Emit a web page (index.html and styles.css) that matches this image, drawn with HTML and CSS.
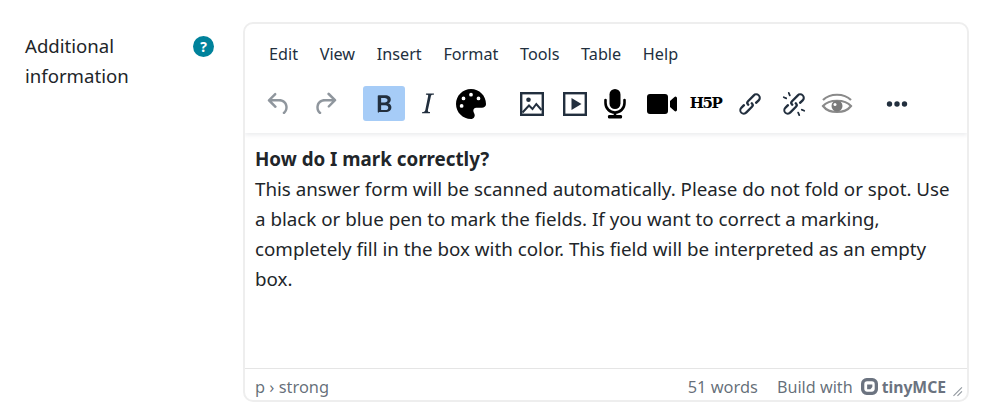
FILE: index.html
```html
<!DOCTYPE html>
<html lang="en">
<head>
<meta charset="utf-8">
<title>Additional information</title>
<link rel="stylesheet" href="styles.css">
</head>
<body>
<div class="field">
  <div class="label-col">
    <label class="label">Additional information</label>
    <span class="help">?</span>
  </div>
  <div class="editor">
    <div class="header">
      <div class="menubar">
        <span class="menu">Edit</span><span class="menu">View</span><span class="menu">Insert</span><span class="menu">Format</span><span class="menu">Tools</span><span class="menu">Table</span><span class="menu">Help</span>
      </div>
      <div class="toolbar">
        <div class="group g-history">
          <button class="tb dim"><svg viewBox="0 0 24 24" width="30" height="30"><path d="M6.400 8H12c3.700 0 6.200 2 6.800 5.100.6 2.700-.4 5.600-2.300 6.800a1 1 0 0 1-1-1.800c1.100-.6 1.800-2.700 1.400-4.600-.5-2.100-2.100-3.500-4.900-3.500H6.400l3.300 3.300a1 1 0 1 1-1.400 1.400l-5-5a1 1 0 0 1 0-1.400l5-5a1 1 0 0 1 1.400 1.400L6.400 8Z"/></svg></button>
          <button class="tb dim"><svg viewBox="0 0 24 24" width="30" height="30"><path d="M17.600 10H12c-2.800 0-4.400 1.400-4.900 3.500-.4 2 .3 4 1.400 4.600a1 1 0 1 1-1 1.800c-2-1.200-2.900-4.100-2.300-6.800.6-3 3.100-5.100 6.800-5.100h5.600l-3.300-3.300a1 1 0 1 1 1.400-1.400l5 5a1 1 0 0 1 0 1.400l-5 5a1 1 0 0 1-1.400-1.400l3.300-3.300Z"/></svg></button>
        </div>
        <div class="group g-format">
          <button class="tb active"><svg viewBox="0 0 24 24" width="30" height="30"><path d="M7.800 19c-.3 0-.5 0-.6-.2l-.2-.5V5.700c0-.2 0-.4.2-.5l.6-.2h5c1.500 0 2.700.3 3.500 1 .7.600 1.100 1.400 1.100 2.500 0 .7-.2 1.300-.6 1.800-.4.600-.9.900-1.500 1.100.8.200 1.400.6 1.900 1.100.5.600.7 1.300.7 2.100 0 1.100-.4 2-1.200 2.700-.8.700-2 1-3.500 1H7.800Zm4.700-8.300c.7 0 1.300-.1 1.700-.5.400-.3.600-.7.600-1.300 0-.5-.2-1-.6-1.200-.4-.3-1-.5-1.700-.5H9.700v3.500h2.800Zm.5 6.100c.8 0 1.400-.2 1.800-.5.4-.3.600-.8.600-1.400 0-.6-.2-1-.6-1.400-.4-.3-1-.5-1.800-.5H9.700v3.800H13Z"/></svg></button>
          <button class="tb"><svg viewBox="0 0 24 24" width="33" height="33"><path d="m16.700 4.700-.1.900h-.3c-.6 0-1 0-1.400.3-.3.300-.4.600-.5 1.100l-2.100 9.800v.6c0 .5.400.800 1.400.8h.2l-.2.800H8l.2-.8h.2c1.100 0 1.800-.5 2-1.500l2-9.800.1-.5c0-.6-.4-.800-1.400-.8h-.3l.2-.9h5.800Z"/></svg></button>
          <button class="tb black"><svg viewBox="0 0 512 512" width="30" height="30"><path d="M512 256c0 .9 0 1.800 0 2.700-.4 36.500-33.600 61.300-70.100 61.300H344c-26.500 0-48 21.500-48 48 0 3.400.4 6.700 1 9.900 2.100 10.200 6.500 20 10.800 29.900 6.100 13.800 12.100 27.500 12.100 42 0 31.800-21.600 60.700-53.400 62-3.500.1-7 .2-10.600.2C114.600 512 0 397.400 0 256S114.600 0 256 0s256 114.600 256 256ZM128 288a32 32 0 1 0-64 0 32 32 0 1 0 64 0Zm0-96a32 32 0 1 0 0-64 32 32 0 1 0 0 64ZM288 96a32 32 0 1 0-64 0 32 32 0 1 0 64 0Zm96 96a32 32 0 1 0 0-64 32 32 0 1 0 0 64Z"/></svg></button>
        </div>
        <div class="group g-media">
          <button class="tb t-pic"><svg class="line" viewBox="0 0 24 24" width="24" height="24"><rect x="1.200" y="1.200" width="21.600" height="21.600"/><path d="M2.500 20.500 9 13.500l3.500 3.500 3.800-5 5.200 6"/><circle class="solid" cx="8.500" cy="7.800" r="2.300"/></svg></button>
          <button class="tb t-pic"><svg class="line" viewBox="0 0 24 24" width="24" height="24"><rect x="1.200" y="1.200" width="21.600" height="21.600"/><path class="solid" d="M8.500 6 18.500 12l-10 6V6Z"/></svg></button>
          <button class="tb black t-mic"><svg viewBox="0 0 22 31" width="22" height="31"><rect x="5.500" y="1" width="11" height="20" rx="5.500"/><path class="u" d="M1.500 12v3a9.500 9.500 0 0 0 19 0v-3"/><rect x="9.700" y="24" width="2.600" height="4"/><rect x="4" y="27" width="14" height="3.500" rx="1.200"/></svg></button>
          <button class="tb black t-video"><svg viewBox="0 0 30 20" width="30" height="20"><path d="M3 0h15a3 3 0 0 1 3 3v14a3 3 0 0 1-3 3H3a3 3 0 0 1-3-3V3a3 3 0 0 1 3-3Z"/><path d="M23 7l4.500-4a1.500 1.500 0 0 1 2.500 1v12a1.500 1.500 0 0 1-2.500 1L23 13Z"/></svg></button>
          <button class="tb t-h5p"><span class="h5p">H5P</span></button>
          <button class="tb t-link"><svg viewBox="0 0 24 24" width="28" height="28"><path d="M6.200 12.300a1 1 0 0 1 1.400 1.400l-2 2a2 2 0 1 0 2.600 2.800l4.800-4.800a1 1 0 0 0 0-1.400 1 1 0 1 1 1.400-1.300 2.900 2.900 0 0 1 0 4.100l-4.800 4.800a3.900 3.900 0 0 1-5.700 0 3.900 3.900 0 0 1 .2-5.600l2-2Zm11.600-.6a1 1 0 0 1-1.400-1.400l2.100-2a2 2 0 1 0-2.700-2.800L11 10.300a1 1 0 0 0 0 1.400A1 1 0 1 1 9.600 13a2.900 2.900 0 0 1 0-4.100l4.800-4.800a3.900 3.900 0 0 1 5.700 0 3.900 3.900 0 0 1 0 5.600l-2.200 2Z"/></svg></button>
          <button class="tb t-unlink"><svg viewBox="0 0 24 24" width="28" height="28"><path d="M6.200 12.300a1 1 0 0 1 1.400 1.400l-2 2a2 2 0 1 0 2.600 2.800l4.800-4.800a1 1 0 0 0 0-1.400 1 1 0 1 1 1.400-1.300 2.900 2.900 0 0 1 0 4.100l-4.800 4.800a3.900 3.900 0 0 1-5.700 0 3.900 3.900 0 0 1 .2-5.600l2-2Zm11.600-.6a1 1 0 0 1-1.400-1.400l2.100-2a2 2 0 1 0-2.700-2.800L11 10.300a1 1 0 0 0 0 1.400A1 1 0 1 1 9.600 13a2.900 2.900 0 0 1 0-4.100l4.800-4.800a3.900 3.900 0 0 1 5.700 0 3.900 3.900 0 0 1 0 5.600l-2.200 2Z"/><path d="M7.200 1.800a.8.800 0 0 1 1 .4l1 2.300a.8.800 0 0 1-1.400.6l-1-2.300a.8.800 0 0 1 .4-1ZM2.500 6a.8.800 0 0 1 1-.5l2.300 1a.8.800 0 0 1-.6 1.400l-2.300-1a.8.800 0 0 1-.4-.9ZM21.500 18a.8.800 0 0 1-1 .5l-2.300-1a.8.800 0 0 1 .6-1.400l2.300 1a.8.800 0 0 1 .4.900ZM16.800 22.200a.8.800 0 0 1-1-.4l-1-2.300a.8.800 0 0 1 1.400-.6l1 2.300a.8.800 0 0 1-.4 1Z"/></svg></button>
          <button class="tb t-eye"><svg class="eye" viewBox="0 0 32 24" width="32" height="24"><path d="M2 8C9 1 23 1 30 8"/><path d="M2 14C8 7 24 7 30 14 24 22 8 22 2 14Z"/><circle class="iris" cx="16" cy="14" r="5.500"/><circle class="glint" cx="14" cy="12.500" r="1.500"/></svg></button>
        </div>
        <div class="group g-more">
          <button class="tb"><svg viewBox="0 0 24 24" width="24" height="24"><circle cx="4.500" cy="12" r="2.700"/><circle cx="12" cy="12" r="2.700"/><circle cx="19.500" cy="12" r="2.700"/></svg></button>
        </div>
      </div>
    </div>
    <div class="content">
      <p><strong>How do I mark correctly?</strong><br>This answer form will be scanned automatically. Please do not fold or spot. Use a black or blue pen to mark the fields. If you want to correct a marking, completely fill in the box with color. This field will be interpreted as an empty box.</p>
    </div>
    <div class="status">
      <span class="path">p › strong</span>
      <span class="words">51 words</span>
      <span class="brand">Build with
        <svg class="logo" viewBox="0 0 18 18" width="17" height="17"><path fill-rule="evenodd" d="M6 0h6a6 6 0 0 1 6 6v6a6 6 0 0 1-6 6H6a6 6 0 0 1-6-6V6a6 6 0 0 1 6-6Zm.5 3.500a3 3 0 0 0-3 3v5a3 3 0 0 0 3 3h5a3 3 0 0 0 3-3v-5a3 3 0 0 0-3-3h-5Z"/><path d="M6.500 7h5.500v2.500l-2 2.500H6.500V7Z"/></svg>
        <b class="tiny">tinyMCE</b>
      </span>
      <svg class="grip" viewBox="0 0 10 10" width="11" height="11"><path d="M8.700 1 1 8.700l.7.700L9.400 1.700 8.700 1Zm.7 4.300L5.300 9.400l-.7-.7 4.100-4.100.7.700Z"/></svg>
    </div>
  </div>
</div>
</body>
</html>
```

FILE: styles.css
```css
* { box-sizing: border-box; }
html, body { margin: 0; padding: 0; background: #fff; }
body {
  font-family: "Noto Sans", "Open Sans", sans-serif;
  font-size: 18.77px;
  color: #212529;
}
.field { display: flex; padding: 22px 29px 14px 25px; }
.label-col { width: 218px; flex: none; display: flex; justify-content: space-between; align-items: flex-start; padding: 9px 29px 0 0; }
.label { width: 130px; line-height: 30px; font-size: 18.6px; color: #212529; }
.help {
  width: 21px; height: 21px; margin-top: 5px; border-radius: 50%;
  background: #00829b; color: #fff; font: 700 14px/21px "Noto Sans", sans-serif; text-align: center;
}
.editor {
  flex: 1; height: 380px; display: flex; flex-direction: column;
  border: 2px solid #eeeeee; border-radius: 10px; overflow: hidden; background: #fff;
}
.header { height: 109px; flex: none; box-shadow: 0 2px 4px rgba(34,47,62,.09); position: relative; padding-top: 12px; }
.menubar { display: flex; height: 36px; padding-left: 24px; gap: 21.7px; align-items: center; font-size: 16.2px; }
.menu { color: #222f3e; }
.toolbar { display: flex; padding: 14px 0 0 13px; align-items: center; }
.group { display: flex; align-items: center; }
.g-history { gap: 4px; margin-right: 17px; }
.g-format { gap: 1.5px; margin-right: 18px; }
.g-media { margin-right: 18px; }
.tb {
  width: 42px; height: 35px; padding: 0; border: 0; border-radius: 3px; background: none; flex: none;
  display: flex; align-items: center; justify-content: center; fill: #222f3e;
}
.tb.dim svg { opacity: .5; }
.tb.active { background: #a6ccf7; }
.tb.black { fill: #000; }
.t-pic { width: 43px; }
.t-mic { width: 38px; }
.t-video { width: 56px; }
.t-h5p { width: 31px; }
.t-link { width: 44px; margin-left: 7px; }
.t-unlink { width: 44px; }
.line { fill: none; stroke: #222f3e; stroke-width: 2.4; }
.line path { stroke-width: 2; }
.line .solid { fill: #222f3e; stroke: none; }
.u { fill: none; stroke: #000; stroke-width: 2.6; stroke-linecap: round; }
.h5p { font: 900 15px/1 "DejaVu Serif", serif; letter-spacing: -1.5px; color: #000; }
.eye { fill: none; stroke: #8a8a8a; stroke-width: 2.2; }
.eye .iris { fill: #7a7a7a; stroke: none; }
.eye .glint { fill: #fff; stroke: none; }
.content { flex: 1; padding: 11px 10px 0 10px; }
.content p { margin: 0; line-height: 30px; color: #212529; }
.status {
  height: 32px; flex: none; border-top: 1px solid #e5e5e5; display: flex; align-items: center;
  padding: 4px 4px 0 10px; color: rgba(34,47,62,.7); font-size: 16.4px;
}
.path { margin-right: auto; }
.words { margin-right: 19px; }
.brand { display: flex; align-items: center; gap: 6px; margin-right: 6px; font-size: 16.2px; }
.logo { fill: #6b7380; margin-left: 2px; }
.tiny { font-weight: 700; font-size: 15.7px; margin-left: -2px; color: #6b7380; }
.grip { fill: rgba(34,47,62,.5); align-self: flex-end; margin-bottom: 3px; }
```
